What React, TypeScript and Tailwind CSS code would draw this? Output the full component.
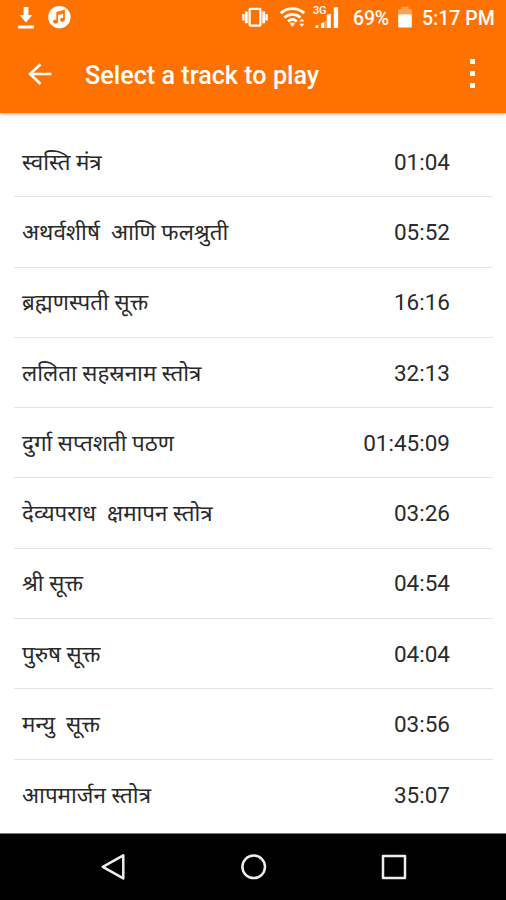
interface Track {
  id: number;
  title: string;
  duration: string;
}

const tracks: Track[] = [
  { id: 1, title: "स्वस्ति मंत्र", duration: "01:04" },
  { id: 2, title: "अथर्वशीर्ष  आणि फलश्रुती", duration: "05:52" },
  { id: 3, title: "ब्रह्मणस्पती सूक्त", duration: "16:16" },
  { id: 4, title: "ललिता सहस्रनाम स्तोत्र", duration: "32:13" },
  { id: 5, title: "दुर्गा सप्तशती पठण", duration: "01:45:09" },
  { id: 6, title: "देव्यपराध  क्षमापन स्तोत्र", duration: "03:26" },
  { id: 7, title: "श्री सूक्त", duration: "04:54" },
  { id: 8, title: "पुरुष सूक्त", duration: "04:04" },
  { id: 9, title: "मन्यु  सूक्त", duration: "03:56" },
  { id: 10, title: "आपमार्जन स्तोत्र", duration: "35:07" },
];

function StatusBar() {
  return (
    <div className="flex h-9 items-center pl-[18px] pr-[10px] text-white">
      <svg className="h-9 w-4 shrink-0" viewBox="0 0 16 36" fill="currentColor">
        <path d="M5.6 7h4.8v8h4L8 22.5 1.6 15h4zM0 25.5h16v3H0z" />
      </svg>
      <svg className="ml-[14px] h-9 w-[23px] shrink-0" viewBox="0 0 23 36">
        <circle cx="11.4" cy="17.2" r="11.2" fill="currentColor" />
        <path d="M9.2 21.5V12.6l6.8-1.7v8.7M9.2 14.5l6.8-1.7" fill="none" stroke="#ff7200" strokeWidth="1.7" />
        <ellipse cx="7.5" cy="21.6" rx="2.5" ry="2.1" fill="#ff7200" />
        <ellipse cx="14.4" cy="19.8" rx="2.4" ry="2" fill="#ff7200" />
      </svg>

      <div className="ml-auto flex h-9 items-center">
        <svg className="h-9 w-[26px] shrink-0" viewBox="0 0 26 36" fill="none" stroke="currentColor">
          <rect x="7.6" y="8.9" width="10.8" height="16.8" rx="1" strokeWidth="2.3" />
          <path d="M4.3 11.5v11.8M21.7 11.5v11.8" strokeWidth="2.8" />
          <path d="M1.4 14v6.6M24.6 14v6.6" strokeWidth="2.4" />
        </svg>
        <svg className="ml-[12px] h-9 w-[25px] shrink-0" viewBox="0 0 25 36" fill="none" stroke="currentColor">
          <path d="M.8 13.2c6.6-6.2 16.8-6.2 23.4 0M4.4 17.5c4.8-4.3 11.4-4.3 16 0M8 21.4c2.8-2.5 6-2.5 8.8 0" strokeWidth="2.7" />
          <path d="M9.7 23.6c1.7-1.4 3.7-1.4 5.4 0l-2.7 3.2z" fill="currentColor" stroke="none" />
          <path d="M19.2 21.6l2.6-3 2.6 3zM19.2 23.8l2.6 3 2.6-3z" fill="currentColor" stroke="none" />
        </svg>
        <div className="relative ml-[8px] h-9 w-[26px] shrink-0">
          <svg className="h-9 w-[26px]" viewBox="0 0 26 36" fill="currentColor">
            <path d="M2.5 28v-2.2l2.8-1V28zM8 28v-4.5l3.2-1.5v6zM13.8 14.8l4-1V28h-4zM20.8 7.3h4.3V28h-4.3z" />
            <path d="M11.2 22l2.6-1.5V28h-2.6z" opacity=".35" />
          </svg>
          <span className="absolute left-0 top-[5px] text-[11px] font-medium leading-[12px] tracking-[-0.3px]">3G</span>
        </div>
        <span className="ml-[14px] w-[37px] whitespace-nowrap pt-px text-[19.5px] font-medium leading-9 tracking-[-0.2px]">69%</span>
        <svg className="ml-[8px] h-9 w-[14px] shrink-0" viewBox="0 0 14 36" fill="currentColor">
          <path d="M.2 14.3V9h3.3V6.8h7V9h3.3v5.3z" opacity=".35" />
          <path d="M.2 14.3h13.6v12.2a1 1 0 0 1-1 1H1.2a1 1 0 0 1-1-1z" />
        </svg>
        <span className="ml-[10px] w-[74px] whitespace-nowrap pt-px text-[19.5px] font-medium leading-9">5:17 PM</span>
      </div>
    </div>
  );
}

function Toolbar() {
  return (
    <div className="flex h-[77px] items-center pl-[28px] pr-[31px] text-white">
      <svg className="h-6 w-6 shrink-0" viewBox="0 0 24 24" fill="none" stroke="currentColor" strokeWidth="2.7">
        <path d="M23.3 11H2.5M12.5 1.2L2.2 11l10.3 10" />
      </svg>
      <h1 className="ml-[33px] whitespace-nowrap pt-[2px] text-[25.2px] font-medium leading-[30px]">Select a track to play</h1>
      <div className="ml-auto flex flex-col gap-[7px] pb-[2px]">
        <span className="size-[5px] bg-white" />
        <span className="size-[5px] bg-white" />
        <span className="size-[5px] bg-white" />
      </div>
    </div>
  );
}

function NavigationBar() {
  return (
    <div className="flex h-[67px] shrink-0 items-center justify-between border-t border-[#777] bg-black pl-[100px] pr-[98px]">
      <svg className="size-[28px]" viewBox="0 0 28 28" fill="none" stroke="#eee" strokeWidth="2.5" strokeLinejoin="round">
        <path d="M23.3 2.4v23L2.8 13.9z" />
      </svg>
      <svg className="size-[28px]" viewBox="0 0 28 28" fill="none" stroke="#eee" strokeWidth="2.5">
        <circle cx="13.7" cy="13.8" r="11.3" />
      </svg>
      <svg className="size-[28px]" viewBox="0 0 28 28" fill="none" stroke="#eee" strokeWidth="2.5" strokeLinejoin="round">
        <rect x="3" y="3" width="22" height="22" />
      </svg>
    </div>
  );
}

export default function App() {
  return (
    <div className="flex h-[900px] w-[506px] flex-col overflow-hidden bg-white font-['Roboto','Noto_Sans',sans-serif]">
      <header className="h-[113px] shrink-0 bg-[#ff7200] shadow-[0_1px_4px_rgba(0,0,0,0.35)]">
        <StatusBar />
        <Toolbar />
      </header>

      <ul className="min-h-0 flex-1 overflow-hidden pl-[14px] pr-[13px] pt-[14px]">
        {tracks.map((track) => (
          <li
            key={track.id}
            className="flex h-[70.3px] items-center justify-between border-b border-[#e4e4e4] pl-[8px] pr-[43px] text-[#2a2a2a] last:border-0"
          >
            {/* Sanskrit shaping joins क्त into one ligature */}
            <span lang="sa" className="whitespace-pre text-[22.4px] leading-[30px]">{track.title}</span>
            <span className="text-[22.5px] leading-[30px]">{track.duration}</span>
          </li>
        ))}
      </ul>

      <NavigationBar />
    </div>
  );
}
